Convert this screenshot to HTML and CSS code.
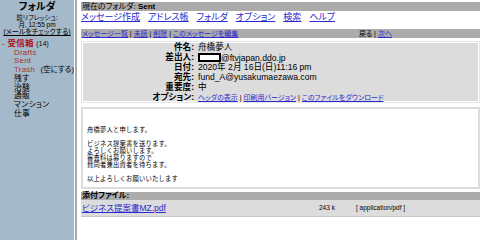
FILE: index.html
```html
<!DOCTYPE html>
<html lang="ja">
<head>
    <meta charset="UTF-8">
    <title>SquirrelMail - メッセージ表示</title>
    <link rel="stylesheet" href="styles.css">
</head>
<body>
    <div class="frames">
        <aside class="left">
            <div class="left-title">フォルダ</div>
            <div class="refresh">前リフレッシュ:<br>月, 12:55 pm</div>
            <div class="check"><a href="#">(メールをチェックする)</a></div>

            <ul class="folders">
                <li class="inbox">- <b>受信箱</b> <small>(14)</small></li>
                <li class="special">Drafts</li>
                <li class="special">Sent</li>
                <li class="special">Trash <span class="purge">(空にする)</span></li>
                <li>残す</li>
                <li>治験</li>
                <li>通販</li>
                <li>マンション</li>
                <li>仕事</li>
            </ul>
        </aside>

        <div class="divider"></div>

        <main class="right">
            <div class="bar current">現在のフォルダ: <b>Sent</b></div>

            <nav class="menu">
                <a href="#">メッセージ作成</a>
                <a href="#">アドレス帳</a>
                <a href="#">フォルダ</a>
                <a href="#">オプション</a>
                <a href="#">検索</a>
                <a href="#">ヘルプ</a>
            </nav>

            <div class="bar nav">
                <div>
                    <a href="#">メッセージ一覧</a> | <a href="#">未読</a> | <a href="#">削除</a> | <a href="#">このメッセージを編集</a>
                </div>
                <div class="prevnext">戻る | <a href="#">次へ</a></div>
            </div>

            <div class="headers">
                <div class="label">件名:</div><div>舟橋夢人</div>
                <div class="label">差出人:</div><div><span class="redact"></span>@ftvjapan.ddo.jp</div>
                <div class="label">日付:</div><div>2020年 2月 16日(日)11:16 pm</div>
                <div class="label">宛先:</div><div>fund_A@yusakumaezawa.com</div>
                <div class="label">重要度:</div><div>中</div>
                <div class="label">オプション:</div>
                <div class="opts"><a href="#">ヘッダの表示</a> | <a href="#">印刷用バージョン</a> | <a href="#">このファイルをダウンロード</a></div>
            </div>

            <div class="body">
                <p>舟橋夢人と申します。</p>
                <p>ビジネス提案書を送ります。<br>よろしくお願いします。<br>審査料は募りますので<br>賛同者兼出資者を待ちます。</p>
                <p>以上よろしくお願いいたします</p>
            </div>

            <div class="bar attach-title">添付ファイル:</div>
            <div class="attach">
                <a href="#">ビジネス提案書MZ.pdf</a>
                <span class="size">243 k</span>
                <span class="type">[ application/pdf ]</span>
            </div>
        </main>
    </div>
</body>
</html>
```

FILE: styles.css
```css
body {
    margin: 0;
    background: white;
    color: #000;
    font-family: "Liberation Sans", "Noto Sans CJK JP", sans-serif;
    font-feature-settings: "palt";
    font-size: 9px;
    line-height: 1.2;
}

a {
    color: #2a2ad0;
}

.frames {
    display: flex;
    height: 240px;
}

/* left frame */

.left {
    width: 74px;
    background: #a4b9ca;
    text-align: center;
    white-space: nowrap;
}

.left-title {
    font-size: 10px;
    font-weight: bold;
    margin-top: 1px;
    line-height: 12px;
}

.refresh {
    font-size: 6.5px;
    line-height: 7px;
    margin-top: 1px;
}

.check {
    font-size: 7px;
    line-height: 8px;
}

.check a {
    color: #000;
}

.folders {
    list-style: none;
    margin: 3px 0 0;
    padding: 0;
    text-align: left;
    font-size: 7.8px;
    line-height: 8.7px;
    letter-spacing: 0.3px;
}

.folders li {
    padding-left: 14px;
}

.folders .inbox {
    padding-left: 2px;
    color: #b01010;
}

.folders .inbox b {
    font-size: 8.5px;
}

.folders .inbox small {
    font-size: 6.5px;
    color: #000;
}

.folders .special {
    color: #a83030;
}

.purge {
    color: #000;
    font-size: 7.5px;
    letter-spacing: 0;
    margin-left: 3px;
}

.divider {
    width: 2px;
    border-left: 1px solid #fff;
    background: #a9a9a9;
}

/* right frame */

.right {
    flex: 1;
    padding: 2px 0 0 4px;
    overflow: hidden;
}

.bar {
    background: #ababab;
    height: 9px;
    line-height: 9px;
    padding-left: 1px;
}

.current {
    font-size: 8px;
}

.menu {
    display: flex;
    gap: 8px;
    margin: 1px 0 6px;
    font-size: 9px;
    line-height: 11px;
}

.nav {
    display: flex;
    justify-content: space-between;
    font-size: 7px;
}

.prevnext {
    margin-right: 88px;
}

.headers {
    margin-top: 3px;
    background: #dcdcdc;
    border: 1px solid #e6e6e6;
    box-shadow: inset 0 0 0 1px #fff;
    padding: 1px 0 0;
    display: grid;
    grid-template-columns: 112px 1fr;
    column-gap: 4px;
    font-size: 8.6px;
    line-height: 9.7px;
}

.headers .label {
    text-align: right;
    font-weight: bold;
}

.redact {
    display: inline-block;
    width: 19px;
    height: 5px;
    border: 2px solid #000;
    background: #fff;
    vertical-align: -1px;
}

.opts {
    font-size: 7px;
}

.body {
    margin-top: 4px;
    border: 2px solid #dcdcdc;
    padding: 17px 4px 5px;
    font-size: 6.3px;
    font-feature-settings: normal;
    letter-spacing: 0.2px;
    line-height: 7px;
}

.body p {
    margin: 0 0 7px;
}

.body p:last-child {
    margin-bottom: 0;
}

.attach-title {
    margin-top: 3px;
    height: 8px;
    line-height: 8px;
    font-size: 8px;
    font-weight: bold;
}

.attach {
    background: #dcdcdc;
    height: 16px;
    display: grid;
    grid-template-columns: 237px 36px 80px;
    align-items: center;
    padding-left: 1px;
    font-size: 8.5px;
    line-height: 10px;
    border-bottom: 1px solid #c8c8c8;
}

.size, .type {
    font-size: 6.5px;
}

.type {
    padding-left: 1px;
}
```
